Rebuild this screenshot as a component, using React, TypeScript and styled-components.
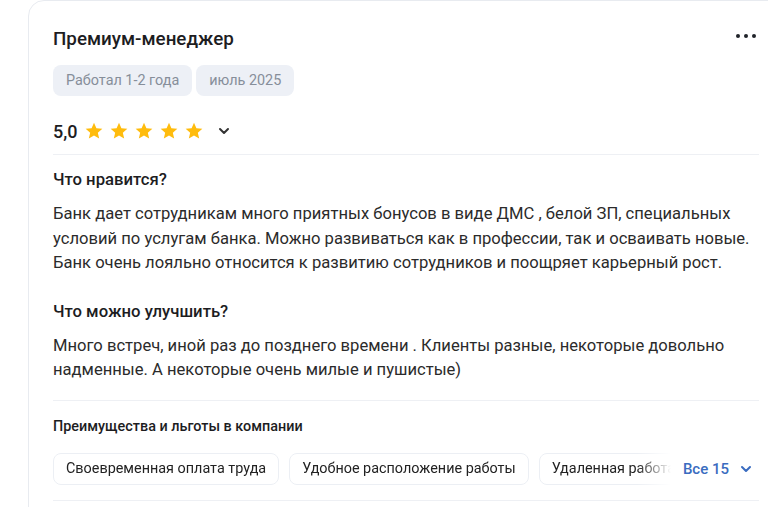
import styled, { createGlobalStyle } from "styled-components";

const GlobalStyle = createGlobalStyle`
  html, body {
    margin: 0;
    padding: 0;
    background: #ffffff;
    overflow: hidden;
  }
  body {
    font-family: Roboto, "Noto Sans", sans-serif;
    color: #222;
  }
`;

const benefits = [
  "Своевременная оплата труда",
  "Удобное расположение работы",
  "Удаленная работа",
];

function Star() {
  return (
    <svg width="20" height="20" viewBox="0 0 24 24">
      <path
        d="M12 2.2l2.9 6.6 7.1.6-5.4 4.7 1.6 7-6.2-3.7-6.2 3.7 1.6-7L2 9.4l7.1-.6z"
        fill="#ffbc0d"
      />
    </svg>
  );
}

function Chevron({ color }: { color: string }) {
  return (
    <svg width="14" height="14" viewBox="0 0 14 14" fill="none">
      <path d="M3 5l4 4 4-4" stroke={color} strokeWidth="2" strokeLinecap="round" strokeLinejoin="round" />
    </svg>
  );
}

export default function App() {
  return (
    <>
      <GlobalStyle />
      <Page>
        <Card>
          <Header>
            <Title>Премиум-менеджер</Title>
            <MoreButton aria-label="Ещё">
              <Dot />
              <Dot />
              <Dot />
            </MoreButton>
          </Header>

          <Tags>
            <Tag>Работал 1-2 года</Tag>
            <Tag>июль 2025</Tag>
          </Tags>

          <Rating>
            <Score>5,0</Score>
            <Stars>
              {[0, 1, 2, 3, 4].map((i) => (
                <Star key={i} />
              ))}
            </Stars>
            <Chevron color="#333" />
          </Rating>

          <Divider />

          <Section>
            <SectionTitle>Что нравится?</SectionTitle>
            <Text>
              Банк дает сотрудникам много приятных бонусов в виде ДМС , белой ЗП, специальных
              условий по услугам банка. Можно развиваться как в профессии, так и осваивать новые.
              Банк очень лояльно относится к развитию сотрудников и поощряет карьерный рост.
            </Text>
          </Section>

          <Section>
            <SectionTitle>Что можно улучшить?</SectionTitle>
            <Text>
              Много встреч, иной раз до позднего времени . Клиенты разные, некоторые довольно
              надменные. А некоторые очень милые и пушистые)
            </Text>
          </Section>

          <Divider />

          <Benefits>
            <BenefitsTitle>Преимущества и льготы в компании</BenefitsTitle>
            <ChipRow>
              <ChipList>
                {benefits.map((b) => (
                  <Chip key={b}>{b}</Chip>
                ))}
              </ChipList>
              <ShowAll>
                Все 15
                <Chevron color="#3a6cc0" />
              </ShowAll>
            </ChipRow>
          </Benefits>

          <Divider />
        </Card>
      </Page>
    </>
  );
}

const Page = styled.div`
  padding-left: 28px;
  width: 800px;
`;

const Card = styled.div`
  width: 756px;
  box-sizing: border-box;
  border: 1px solid #e8ebf0;
  border-radius: 16px;
  padding: 21px 24px 40px;
  background: #fff;
`;

const Header = styled.div`
  display: flex;
  align-items: center;
  justify-content: space-between;
  height: 34px;
`;

const Title = styled.h2`
  margin: 0;
  font-size: 18.8px;
  font-weight: 500;
  color: #1d1d1f;
`;

const MoreButton = styled.button`
  display: flex;
  gap: 3.5px;
  border: 0;
  background: none;
  padding: 0;
  margin: 0 3px 6px 0;
`;

const Dot = styled.span`
  width: 4.5px;
  height: 4.5px;
  border-radius: 50%;
  background: #1f2329;
`;

const Tags = styled.div`
  display: flex;
  gap: 4px;
  margin-top: 9px;
`;

const Tag = styled.span`
  display: inline-flex;
  align-items: center;
  height: 31px;
  padding: 0 13px;
  border-radius: 8px;
  background: #edf0f6;
  color: #868e9a;
  font-size: 14.4px;
`;

const Rating = styled.div`
  display: flex;
  align-items: center;
  margin-top: 19px;
  height: 32px;
`;

const Score = styled.span`
  font-size: 18px;
  font-weight: 500;
  color: #1d1d1f;
  margin-right: 6px;
`;

const Stars = styled.div`
  display: flex;
  gap: 5px;
  margin-right: 13px;
`;

const Divider = styled.hr`
  margin: 7px 0 0;
  border: 0;
  height: 1px;
  background: #eef0f4;
`;

const Section = styled.section`
  padding-top: 14px;
  & + & {
    padding-top: 25px;
  }
  & + ${Divider} {
    margin-top: 17px;
  }
`;

const SectionTitle = styled.h3`
  margin: 0 0 11px;
  font-size: 16.7px;
  font-weight: 500;
  color: #1d1d1f;
  line-height: 22px;
`;

const Text = styled.p`
  margin: 0;
  font-size: 16.6px;
  line-height: 24.5px;
  color: #2b2b2b;
`;

const Benefits = styled.div`
  padding-top: 16px;
  & + ${Divider} {
    margin-top: 15px;
  }
`;

const BenefitsTitle = styled.h4`
  margin: 0 0 16px;
  font-size: 14.4px;
  font-weight: 500;
  color: #1d1d1f;
  line-height: 20px;
`;

const ChipRow = styled.div`
  display: flex;
  align-items: center;
`;

const ChipList = styled.div`
  flex: 1;
  display: flex;
  gap: 10px;
  overflow: hidden;
  white-space: nowrap;
  -webkit-mask-image: linear-gradient(to right, #000 calc(100% - 36px), transparent calc(100% - 2px));
  mask-image: linear-gradient(to right, #000 calc(100% - 36px), transparent calc(100% - 2px));
`;

const Chip = styled.span`
  flex-shrink: 0;
  display: inline-flex;
  align-items: center;
  height: 32px;
  box-sizing: border-box;
  padding: 0 12px;
  border: 1px solid #eceff4;
  border-radius: 8px;
  font-size: 14.4px;
  color: #222;
`;

const ShowAll = styled.button`
  display: inline-flex;
  align-items: center;
  gap: 10px;
  border: 0;
  background: none;
  padding: 0 6px 0 10px;
  font-family: inherit;
  font-size: 15px;
  font-weight: 500;
  color: #3a6cc0;
`;
